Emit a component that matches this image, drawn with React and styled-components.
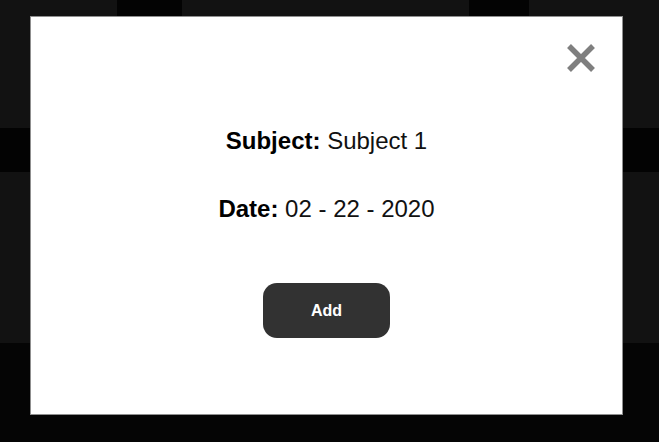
import React from "react";
import styled, { createGlobalStyle } from "styled-components";

const Global = createGlobalStyle`
  html, body { margin: 0; padding: 0; background: #050505; }
  body { font-family: "Liberation Sans", Arial, sans-serif; }
  #root { width: 659px; height: 442px; overflow: hidden; position: relative; }
`;

const Page = styled.div`
  width: 659px;
  height: 442px;
  display: flex;
  flex-direction: column;
  background: #050505;
`;

const TopBand = styled.div`
  height: 128px;
  display: grid;
  grid-template-columns: 117px 65px 287px 60px 1fr;
`;

const Panel = styled.div`
  background: ${(p) => (p.$gap ? "#030303" : "#121212")};
`;

const Band = styled.div`
  height: ${(p) => p.$h}px;
  background: ${(p) => p.$bg};
  flex: ${(p) => (p.$grow ? 1 : "none")};
`;

const Modal = styled.div`
  position: absolute;
  top: 16px;
  left: 30px;
  width: 593px;
  height: 399px;
  box-sizing: border-box;
  background: #fff;
  border: 1px solid #8f8f8f;
  display: flex;
  flex-direction: column;
  align-items: center;
  padding-top: 110px;
`;

const Close = styled.button`
  position: absolute;
  top: 26px;
  right: 26px;
  width: 30px;
  height: 30px;
  padding: 0;
  border: none;
  background: none;
  cursor: pointer;
  display: flex;
  align-items: center;
  justify-content: center;
`;

const Line = styled.div`
  font-size: 24px;
  line-height: 28px;
  color: #111;
  margin-bottom: ${(p) => p.$mb}px;
`;

const Label = styled.b`
  font-weight: 700;
  color: #000;
`;

const AddButton = styled.button`
  width: 127px;
  height: 55px;
  border: none;
  border-radius: 14px;
  background: #323232;
  color: #fff;
  font-family: "Liberation Sans", Arial, sans-serif;
  font-weight: 700;
  font-size: 16px;
  cursor: pointer;
`;

export default function App() {
  return (
    <>
      <Global />
      <Page>
        <TopBand>
          <Panel />
          <Panel $gap />
          <Panel />
          <Panel $gap />
          <Panel />
        </TopBand>
        <Band $h={44} $bg="#030303" />
        <Band $h={171} $bg="#121212" />
        <Band $grow $bg="#050505" />
      </Page>
      <Modal>
        <Close aria-label="Close">
          <svg width="30" height="30" viewBox="0 0 30 30">
            <path d="M3 3 L27 27 M27 3 L3 27" stroke="#7f7f7f" strokeWidth="5.5" strokeLinecap="butt" />
          </svg>
        </Close>
        <Line $mb={40}>
          <Label>Subject:</Label> Subject 1
        </Line>
        <Line $mb={60}>
          <Label>Date:</Label> 02 - 22 - 2020
        </Line>
        <AddButton>Add</AddButton>
      </Modal>
    </>
  );
}
